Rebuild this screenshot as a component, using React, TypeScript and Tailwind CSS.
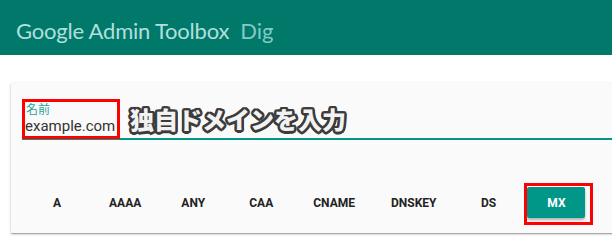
import React from "react";

const types = ["A", "AAAA", "ANY", "CAA", "CNAME", "DNSKEY", "DS", "MX"];

export default function App() {
  return (
    <div className="relative w-[612px] h-[240px] overflow-hidden bg-white [font-family:Roboto,'Noto_Sans',sans-serif]">
      <header className="h-[55px] bg-[#00796b] flex items-center pl-[16px] pt-[5px] [font-family:Lato,Roboto,sans-serif]">
        <span className="text-[22px] tracking-[-0.2px] text-[#b2dfdb]">
          Google Admin Toolbox
        </span>
        <span className="ml-[11px] text-[22px] text-[#80cbc4]">Dig</span>
      </header>

      <div className="mt-[28px] ml-[11px] w-[640px] h-[150px] bg-[#fafafa] shadow-[0_1px_3px_rgba(0,0,0,0.2),0_1px_1px_rgba(0,0,0,0.14),0_2px_1px_-1px_rgba(0,0,0,0.12)]">
        <div className="pt-[20px] pl-[11px]">
          <div className="flex flex-col gap-[2px] border-b-2 border-[#009688] pb-[2px]">
            <div className="pl-[4px] text-[12px] leading-[12px] text-[#26a69a] [font-family:'Noto_Sans_CJK_JP',sans-serif]">
              名前
            </div>
            <div className="pl-[3px] text-[15px] leading-[19px] text-[#333]">
              example.com
            </div>
          </div>
        </div>

        <div className="mt-[47px] ml-[17px] flex gap-[10px]">
          {types.map((t) => (
            <div
              key={t}
              className={
                t === "MX"
                  ? "h-[31px] min-w-[58px] px-[13px] flex items-center justify-center rounded-[2px] text-[12px] font-bold text-white bg-[#009688] shadow-[0_2px_3px_rgba(0,0,0,0.3)]"
                  : "h-[31px] min-w-[58px] px-[13px] flex items-center justify-center rounded-[2px] text-[12px] font-bold text-[#222]"
              }
            >
              {t}
            </div>
          ))}
        </div>
      </div>

      <div className="absolute left-[130px] top-[104px] text-[24px] leading-[30px] font-black text-[#f2f2f2] [font-family:'Noto_Sans_CJK_JP',sans-serif] [text-shadow:2.5px_0_0_#3c3c3c,-2.5px_0_0_#3c3c3c,0_2.5px_0_#3c3c3c,0_-2.5px_0_#3c3c3c,1.8px_1.8px_0_#3c3c3c,-1.8px_1.8px_0_#3c3c3c,1.8px_-1.8px_0_#3c3c3c,-1.8px_-1.8px_0_#3c3c3c,2.3px_1px_0_#3c3c3c,-2.3px_1px_0_#3c3c3c,2.3px_-1px_0_#3c3c3c,-2.3px_-1px_0_#3c3c3c,1px_2.3px_0_#3c3c3c,-1px_2.3px_0_#3c3c3c,1px_-2.3px_0_#3c3c3c,-1px_-2.3px_0_#3c3c3c]">
        独自ドメインを入力
      </div>

      <div className="absolute left-[22px] top-[99px] w-[98px] h-[40px] border-[3px] border-[#f00]" />
      <div className="absolute left-[524px] top-[183px] w-[69px] h-[42px] border-[3px] border-[#f00]" />
    </div>
  );
}
